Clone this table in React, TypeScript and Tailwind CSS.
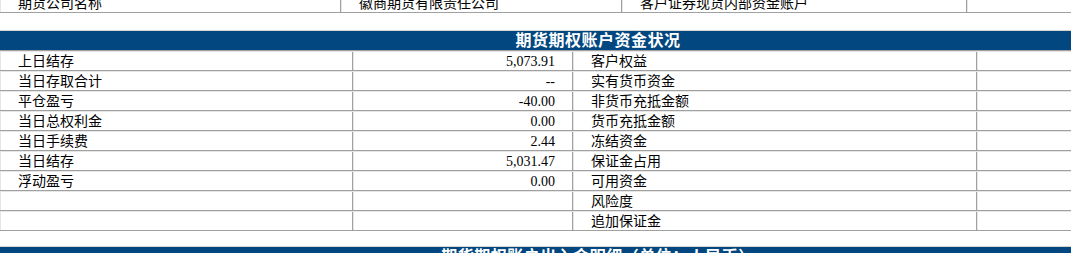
const rows: [string, string, string][] = [
  ['上日结存', '5,073.91', '客户权益'],
  ['当日存取合计', '--', '实有货币资金'],
  ['平仓盈亏', '-40.00', '非货币充抵金额'],
  ['当日总权利金', '0.00', '货币充抵金额'],
  ['当日手续费', '2.44', '冻结资金'],
  ['当日结存', '5,031.47', '保证金占用'],
  ['浮动盈亏', '0.00', '可用资金'],
  ['', '', '风险度'],
  ['', '', '追加保证金'],
];

const font = "[font-family:'Liberation_Serif','Noto_Sans_CJK_SC',serif]";

const Row = ({ children }: { children: React.ReactNode }) => (
  <div className="flex h-5 border-t border-b border-t-[#e6e6e6] border-b-[#a0a0a0]">{children}</div>
);

const Cell = ({ w, children, right }: { w: string; children?: React.ReactNode; right?: boolean }) => (
  <div
    className={`${w} flex items-center border-l border-r border-l-[#e6e6e6] border-r-[#a0a0a0] ${
      right ? 'justify-end pr-[17px]' : 'pl-[17px]'
    }`}
  >
    {children}
  </div>
);

const SectionHeader = ({ title }: { title: string }) => (
  <div className="border-t border-b border-t-[#d4d4d4] border-b-[#a0a0a0] bg-[#02477f] h-[21px] flex items-center justify-center">
    <span className="text-white font-bold text-[16px] leading-none tracking-[0.5px]">{title}</span>
  </div>
);

export default function App() {
  return (
    <div className={`w-[1071px] h-[253px] overflow-hidden bg-white text-black text-[14px] ${font}`}>
      <div className="w-[1196px] -mt-[7px]">
        {/* 账户信息 */}
        <Row>
          <Cell w="w-[341px]">期货公司名称</Cell>
          <Cell w="w-[281px]">徽商期货有限责任公司</Cell>
          <Cell w="w-[345px]">客户证券现货内部资金账户</Cell>
          <Cell w="flex-1" />
        </Row>

        <div className="mt-[17px]">
          <SectionHeader title="期货期权账户资金状况" />
          {rows.map(([label, value, right], i) => (
            <Row key={i}>
              <Cell w="w-[353px]">{label}</Cell>
              <Cell w="w-[220px]" right>
                {value}
              </Cell>
              <Cell w="w-[404px]">{right}</Cell>
              <Cell w="flex-1" />
            </Row>
          ))}
        </div>

        <div className="mt-[15px]">
          <SectionHeader title="期货期权账户出入金明细（单位：人民币）" />
        </div>
      </div>
    </div>
  );
}
